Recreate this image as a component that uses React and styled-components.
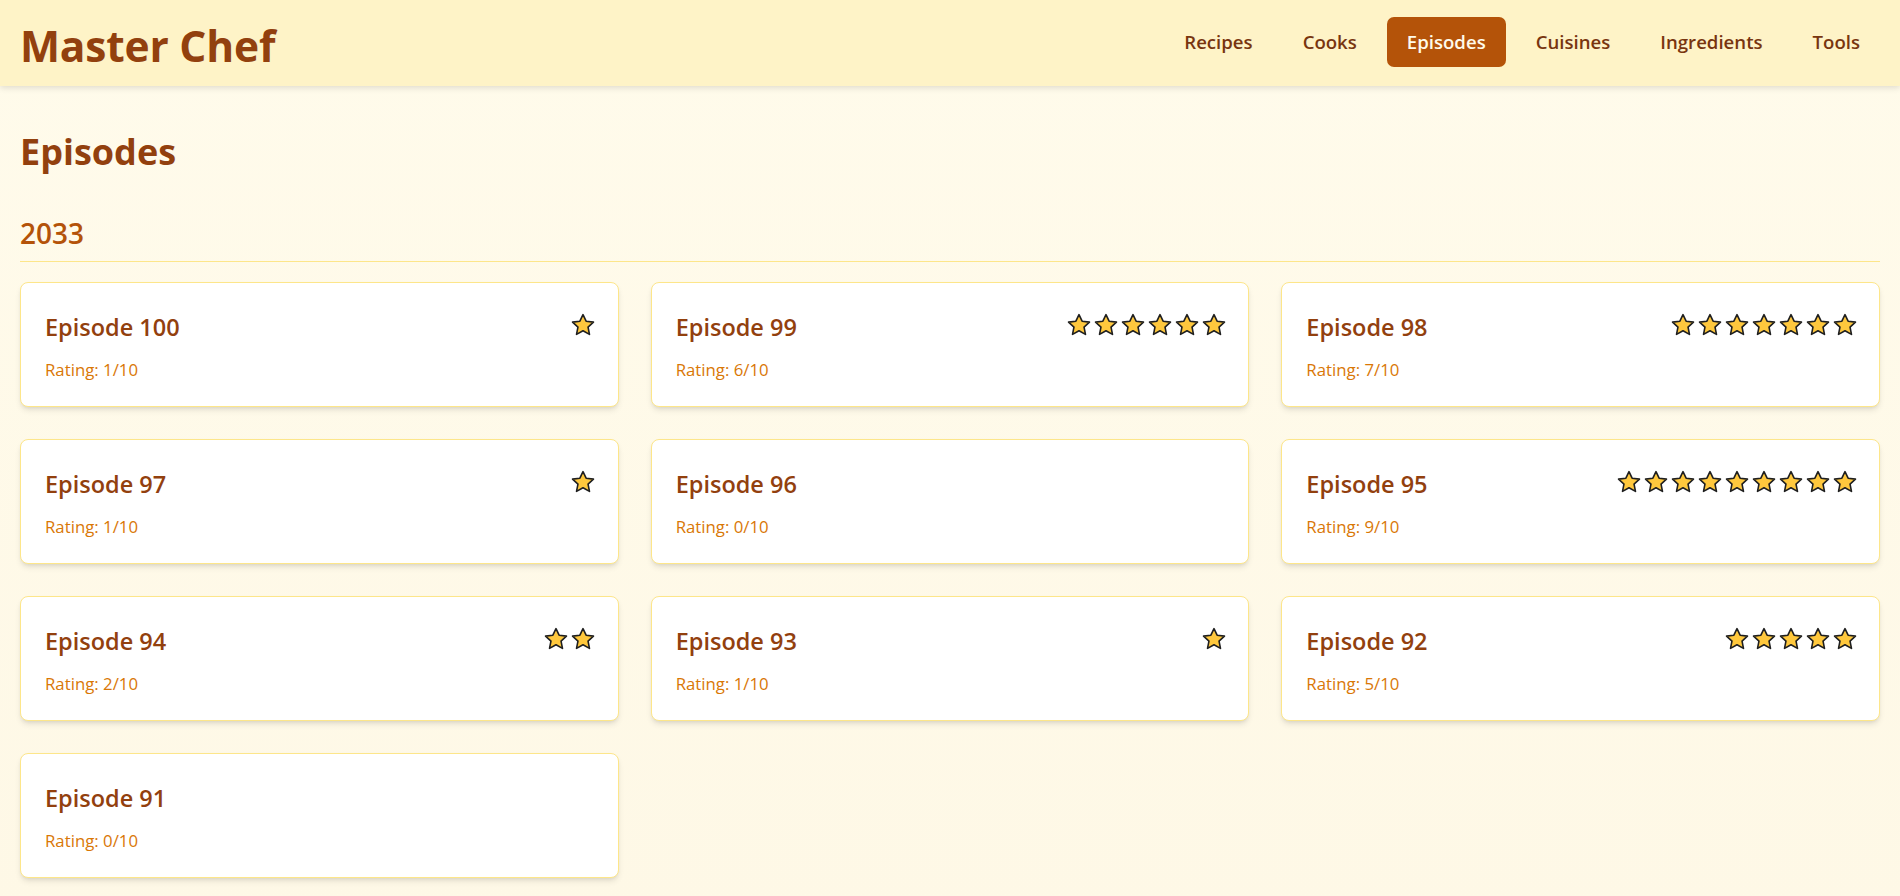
import React from 'react'
import styled, { createGlobalStyle } from 'styled-components'

const GlobalStyle = createGlobalStyle`
  * { box-sizing: border-box; }
  body {
    margin: 0;
    font-family: 'Open Sans', 'Noto Sans', Arial, sans-serif;
    background: linear-gradient(#fffbeb, #fef8e6);
    min-height: 100vh;
  }
`

const Header = styled.header`
  position: relative;
  z-index: 1;
  height: 86px;
  padding: 0 20px;
  display: flex;
  align-items: center;
  justify-content: space-between;
  background: #fef3c7;
  box-shadow: 0 2px 6px rgba(0, 0, 0, 0.12);
`

const Brand = styled.div`
  font-size: 42.5px;
  font-weight: 700;
  color: #92400e;
  padding-top: 4px;
  letter-spacing: -0.2px;
`

const Nav = styled.nav`
  display: flex;
  gap: 10px;
  margin-top: -2px;
`

const NavButton = styled.a`
  padding: 12px 20px;
  border-radius: 7px;
  font-size: 18.6px;
  line-height: 26px;
  font-weight: 600;
  color: ${p => (p.$active ? '#fffbeb' : '#78350f')};
  background: ${p => (p.$active ? '#b45309' : 'transparent')};
  cursor: pointer;
`

const Main = styled.main`
  padding: 44px 20px 40px;
`

const Title = styled.h1`
  margin: 0;
  font-size: 36px;
  line-height: 43px;
  font-weight: 700;
  color: #92400e;
`

const Year = styled.h2`
  margin: 42px 0 0;
  padding-bottom: 10px;
  border-bottom: 1px solid #fde68a;
  font-size: 28px;
  line-height: 36px;
  font-weight: 600;
  color: #b45309;
`

const Grid = styled.div`
  margin-top: 20px;
  display: grid;
  grid-template-columns: repeat(3, 1fr);
  gap: 32px;
`

const Card = styled.div`
  background: #fff;
  border: 1px solid #fde68a;
  border-radius: 8px;
  padding: 24px;
  box-shadow: 0 4px 6px -1px rgba(0, 0, 0, 0.1), 0 2px 4px -2px rgba(0, 0, 0, 0.1);
`

const CardTop = styled.div`
  display: flex;
  justify-content: space-between;
  margin-bottom: 11px;
`

const EpisodeName = styled.h3`
  margin: 0;
  font-size: 23.5px;
  line-height: 40px;
  font-weight: 600;
  color: #92400e;
`

const Stars = styled.div`
  display: flex;
  padding-top: 6px;
  margin-right: -3px;
`

const StarBox = styled.span`
  width: 27px;
  height: 24px;
  display: flex;
  align-items: center;
  justify-content: center;
`

const Rating = styled.div`
  font-size: 16.8px;
  line-height: 24px;
  color: #d97706;
`

const Star = () => (
  <StarBox>
    <svg width='24' height='24' viewBox='0 0 24 24'>
      <path
        d='M12 1.6 L15.12 8.21 L22.46 9.1 L17.04 14.14 L18.47 21.4 L12 17.8 L5.53 21.4 L6.96 14.14 L1.54 9.1 L8.88 8.21 Z'
        fill='#ffc83d'
        stroke='#1f1f1f'
        strokeWidth='1.6'
        strokeLinejoin='round'
      />
    </svg>
  </StarBox>
)

const episodes = [
  { n: 100, r: 1 },
  { n: 99, r: 6 },
  { n: 98, r: 7 },
  { n: 97, r: 1 },
  { n: 96, r: 0 },
  { n: 95, r: 9 },
  { n: 94, r: 2 },
  { n: 93, r: 1 },
  { n: 92, r: 5 },
  { n: 91, r: 0 }
]

const links = ['Recipes', 'Cooks', 'Episodes', 'Cuisines', 'Ingredients', 'Tools']

export default function App () {
  return (
    <>
      <GlobalStyle />
      <Header>
        <Brand>Master Chef</Brand>
        <Nav>
          {links.map(l => (
            <NavButton key={l} $active={l === 'Episodes'}>
              {l}
            </NavButton>
          ))}
        </Nav>
      </Header>
      <Main>
        <Title>Episodes</Title>
        <Year>2033</Year>
        <Grid>
          {episodes.map(ep => (
            <Card key={ep.n}>
              <CardTop>
                <EpisodeName>Episode {ep.n}</EpisodeName>
                {ep.r > 0 && (
                  <Stars>
                    {Array.from({ length: ep.r }).map((_, i) => (
                      <Star key={i} />
                    ))}
                  </Stars>
                )}
              </CardTop>
              <Rating>Rating: {ep.r}/10</Rating>
            </Card>
          ))}
        </Grid>
      </Main>
    </>
  )
}
